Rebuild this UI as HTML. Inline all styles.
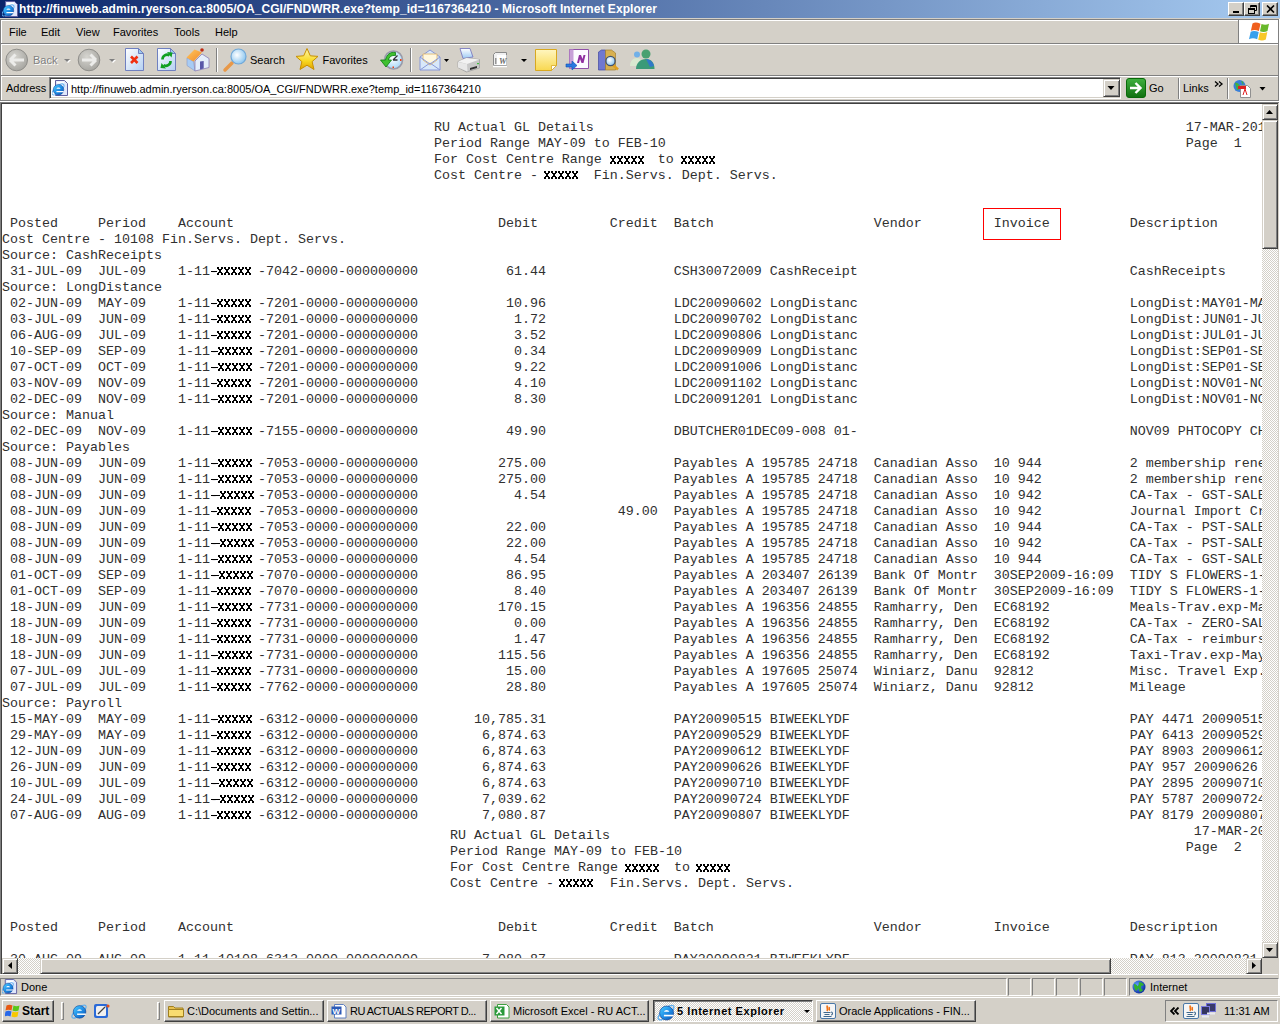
<!DOCTYPE html>
<html><head><meta charset="utf-8">
<style>
*{box-sizing:border-box;margin:0;padding:0}
html,body{width:1280px;height:1024px;overflow:hidden;background:#D4D0C8;font-family:"Liberation Sans",sans-serif;}
.a{position:absolute}
#title{left:0;top:0;width:1280px;height:18px;background:linear-gradient(to right,#0A246A,#A6CAF0);}
#title .t{left:19px;top:2px;color:#fff;font:bold 12px "Liberation Sans",sans-serif;white-space:nowrap;letter-spacing:0.06px}
.wb{top:2px;width:16px;height:14px;background:#D4D0C8;border-top:1px solid #fff;border-left:1px solid #fff;border-right:1px solid #404040;border-bottom:1px solid #404040;box-shadow:inset -1px -1px #808080}
.menu{top:26px;font-size:11px;color:#000;white-space:nowrap}
.tb{font-size:11px;color:#000;white-space:nowrap}
.hsep{height:1px;left:0;width:1280px}
.bevel{background:#D4D0C8;border-top:1px solid #D4D0C8;border-left:1px solid #D4D0C8;border-right:1px solid #404040;border-bottom:1px solid #404040;box-shadow:inset 1px 1px #fff,inset -1px -1px #808080}
.chk{background-color:#D4D0C8;background-image:conic-gradient(#fff 25%,transparent 0 50%,#fff 0 75%,transparent 0);background-size:2px 2px}
#content{left:2px;top:104px;width:1260px;height:854px;background:#fff;overflow:hidden}
.ln{position:absolute;left:0px;height:16px;line-height:16px;font-family:"Liberation Mono",monospace;font-size:13.333px;white-space:pre;color:#303030}
.rx{position:absolute;top:0;width:40px;height:16px;background:#fff;font-family:"Liberation Sans",sans-serif;font-weight:bold;font-size:11px;line-height:16px;color:#000;letter-spacing:-0.5px;-webkit-text-stroke:0.4px #000}
.sb{font-size:11px;white-space:nowrap}
.task{font-size:11px;white-space:nowrap}
.arrow{width:0;height:0;position:absolute}
</style></head><body>
<svg width="0" height="0" style="position:absolute"><defs>
<linearGradient id="ieg" x1="0" y1="0" x2="1" y2="1"><stop offset="0" stop-color="#50d0ff"/><stop offset="0.5" stop-color="#2090e8"/><stop offset="1" stop-color="#0a50b0"/></linearGradient>
<symbol id="ie" viewBox="0 0 16 16">
 <ellipse cx="8" cy="8.5" rx="8" ry="3" transform="rotate(-42 8 8.5)" fill="none" stroke="#60b0f0" stroke-width="1.1"/>
 <circle cx="8.5" cy="8.8" r="5.6" fill="url(#ieg)" stroke="#0a3a90" stroke-width="0.5"/>
 <path d="M6.3 7.7a2.3 1.9 0 0 1 4.4 0z" fill="#fff"/>
 <path d="M6.3 10.2h7.8v1.3h-7.8z" fill="#fff"/>
</symbol>
<symbol id="iepage" viewBox="0 0 17 17">
 <path d="M3.5 0.5h9l3 3v12h-12z" fill="#e0e8fc" stroke="#6060a0"/>
 <path d="M5 1.5h7v2h-7z" fill="#fff"/>
 <use href="#ie" x="-1.5" y="1.5" width="15" height="15"/>
</symbol>
</defs></svg>
<!-- Title bar -->
<div id="title" class="a">
  <svg class="a" style="left:2px;top:1px" width="17" height="17"><use href="#iepage" width="17" height="17"/></svg>
  <div class="a t">http://finuweb.admin.ryerson.ca:8005/OA_CGI/FNDWRR.exe?temp_id=1167364210 - Microsoft Internet Explorer</div>
  <div class="a wb" style="left:1228px"><div class="a" style="left:4px;top:8px;width:6px;height:2px;background:#000"></div></div>
  <div class="a wb" style="left:1244px"><svg class="a" style="left:2px;top:1px" width="10" height="10"><path d="M3.5 1.5h6v5h-2M3.5 1.5v2M3.5 2.5h6" stroke="#000" fill="none"/><rect x="1.5" y="4.5" width="6" height="5" fill="none" stroke="#000"/><path d="M1.5 5.5h6" stroke="#000"/></svg></div>
  <div class="a wb" style="left:1262px"><svg class="a" style="left:3px;top:2px" width="9" height="8"><path d="M1 0.5l7 7M8 0.5l-7 7" stroke="#000" stroke-width="1.6"/></svg></div>
</div>
<!-- frame lines -->
<div class="a" style="left:0;top:19px;width:1280px;height:1px;background:#808080"></div>
<div class="a" style="left:1px;top:20px;width:1277px;height:1px;background:#fff"></div>
<div class="a" style="left:0;top:19px;width:1px;height:82px;background:#808080"></div>
<div class="a" style="left:1px;top:20px;width:1px;height:81px;background:#fff"></div>
<div class="a" style="left:1278px;top:19px;width:1px;height:82px;background:#808080"></div>
<div class="a" style="left:1279px;top:19px;width:1px;height:83px;background:#fff"></div>
<!-- Menu -->
<div class="a menu" style="left:9px">File</div>
<div class="a menu" style="left:41px">Edit</div>
<div class="a menu" style="left:76px">View</div>
<div class="a menu" style="left:113px">Favorites</div>
<div class="a menu" style="left:174px">Tools</div>
<div class="a menu" style="left:215px">Help</div>
<div class="a" style="left:1238px;top:20px;width:1px;height:23px;background:#808080"></div>
<div class="a" style="left:1239px;top:20px;width:39px;height:23px;background:#fff"></div>
<svg class="a" style="left:1248px;top:22px" width="22" height="20" viewBox="0 0 22 20">
 <path d="M4.5 1.5c2-1.2 4.5-1.2 8 0.2l-1.6 7.2c-3-1.2-5.5-1.2-8-0.2z" fill="#f0601e"/>
 <path d="M13.5 2c2.5 1 5 1 7.5-0.2l-1.5 7.2c-2.5 1.2-5 1.2-7.5 0.2z" fill="#68b82a"/>
 <path d="M2.7 9.8c2.2-1 4.8-1 8 0.2l-1.5 7.2c-3-1.2-5.5-1.2-8.2 0z" fill="#38a0ec"/>
 <path d="M11.8 10.3c2.5 1 5 1 7.5-0.2l-1.5 7.4c-2.5 1.2-5 1.2-7.6 0.2z" fill="#f8c828"/>
</svg>
<div class="a hsep" style="top:43px;background:#808080;left:1px;width:1277px"></div>
<div class="a hsep" style="top:44px;background:#fff;left:1px;width:1277px"></div>
<!-- Toolbar -->
<div id="toolbar"><svg class="a" style="left:0;top:45px" width="670" height="30" viewBox="0 45 670 30">
 <defs>
  <radialGradient id="gc" cx="40%" cy="35%" r="70%"><stop offset="0" stop-color="#d6d5d0"/><stop offset="1" stop-color="#a5a49f"/></radialGradient>
  <linearGradient id="pg" x1="0" y1="0" x2="1" y2="1"><stop offset="0" stop-color="#ffffff"/><stop offset="1" stop-color="#b4d0f2"/></linearGradient>
  <linearGradient id="star" x1="0" y1="0" x2="0" y2="1"><stop offset="0" stop-color="#fff8b0"/><stop offset="0.6" stop-color="#f8d820"/><stop offset="1" stop-color="#e0a000"/></linearGradient>
  <radialGradient id="lens" cx="40%" cy="40%" r="60%"><stop offset="0" stop-color="#ffffff"/><stop offset="1" stop-color="#90c8f0"/></radialGradient>
  <linearGradient id="roof" x1="0" y1="0" x2="1" y2="1"><stop offset="0" stop-color="#ffc860"/><stop offset="1" stop-color="#f08828"/></linearGradient>
  <linearGradient id="note" x1="0" y1="0" x2="0" y2="1"><stop offset="0" stop-color="#fff6c0"/><stop offset="1" stop-color="#f8d850"/></linearGradient>
  <linearGradient id="paper" x1="0" y1="0" x2="0" y2="1"><stop offset="0" stop-color="#ffffff"/><stop offset="1" stop-color="#9ccaf4"/></linearGradient>
  <radialGradient id="face" cx="45%" cy="40%" r="60%"><stop offset="0" stop-color="#ffffff"/><stop offset="1" stop-color="#a8d8f8"/></radialGradient>
 </defs>
 <!-- back -->
 <circle cx="16.7" cy="60" r="10.8" fill="url(#gc)" stroke="#8f8e8a" stroke-width="1"/>
 <path d="M10 60h14M10 60l5.5-5.5M10 60l5.5 5.5" stroke="#ececea" stroke-width="3" fill="none"/>
 <text x="34" y="64.5" font-size="11" fill="#fff" style="font-family:'Liberation Sans'">Back</text>
 <text x="33" y="63.5" font-size="11" fill="#808080" style="font-family:'Liberation Sans'">Back</text>
 <path d="M65 60h6l-3 3z" fill="#fff"/><path d="M64 59h6l-3 3z" fill="#808080"/>
 <!-- forward -->
 <circle cx="89" cy="60" r="10.8" fill="url(#gc)" stroke="#8f8e8a" stroke-width="1"/>
 <path d="M82 60h14M96 60l-5.5-5.5M96 60l-5.5 5.5" stroke="#ececea" stroke-width="3" fill="none"/>
 <path d="M110 60h6l-3 3z" fill="#fff"/><path d="M109 59h6l-3 3z" fill="#808080"/>
 <!-- stop -->
 <path d="M125.5 48.5h13l5 5v17h-18z" fill="url(#pg)" stroke="#6f80c0"/>
 <path d="M138.5 48.5v5h5z" fill="#9ccaf0" stroke="#6f80c0"/>
 <path d="M131 56.5l6.5 6.5M137.5 56.5l-6.5 6.5" stroke="#f03010" stroke-width="2.6"/>
 <!-- refresh -->
 <path d="M157.5 48.5h13l5 5v17h-18z" fill="url(#pg)" stroke="#6f80c0"/>
 <path d="M170.5 48.5v5h5z" fill="#9ccaf0" stroke="#6f80c0"/>
 <path d="M162.5 59.5a4.5 4.5 0 0 1 7-4" stroke="#10a020" stroke-width="2.6" fill="none"/><path d="M167 52l5.5 0.5-1 5z" fill="#10a020"/>
 <path d="M170.5 61a4.5 4.5 0 0 1-7 4" stroke="#10a020" stroke-width="2.6" fill="none"/><path d="M166 68.5l-5.5-0.5 1-5z" fill="#10a020"/>
 <!-- home (origin 184,46) -->
 <g transform="translate(184 46)">
  <path d="M3 12l6.5 3.5 1.5 9.5-8-5.5z" fill="#a8ccf4" stroke="#8898c8" stroke-width="0.6"/>
  <path d="M11 15l7-7 7 4.5v9l-14 3.5z" fill="#e4eefa" stroke="#8070b0" stroke-width="0.7"/>
  <path d="M16 15.5l3.7-0.5v7.5l-3.7 1z" fill="#5a58a8"/>
  <path d="M2.5 11.5l8-8 7.5 3-8.5 9z" fill="url(#roof)"/>
  <circle cx="18" cy="4" r="1.8" fill="#c02a10"/>
 </g>
 <!-- sep -->
 <rect x="216" y="48" width="1" height="24" fill="#808080"/><rect x="217" y="48" width="1" height="24" fill="#fff"/>
 <!-- search -->
 <path d="M232 63l-7 7" stroke="#e89848" stroke-width="3.5" stroke-linecap="round"/>
 <circle cx="238.5" cy="56.5" r="7.5" fill="url(#lens)" stroke="#70a8d8" stroke-width="1.2"/>
 <text x="250" y="63.5" font-size="11" fill="#000" style="font-family:'Liberation Sans'">Search</text>
 <!-- star -->
 <path d="M307 48.5l3.3 7.3 7.7 0.6-5.9 5.2 1.9 7.9-7-4.3-7 4.3 1.9-7.9-5.9-5.2 7.7-0.6z" fill="url(#star)" stroke="#c89000" stroke-width="1"/>
 <text x="322.5" y="63.5" font-size="11" fill="#000" style="font-family:'Liberation Sans'">Favorites</text>
 <!-- history (origin 376,46) -->
 <g transform="translate(376 46)">
  <circle cx="17.5" cy="14" r="9" fill="url(#face)" stroke="#9a9aa8" stroke-width="1.6"/>
  <path d="M17 14l4.5-4.5M17 14h4.5" stroke="#303038" stroke-width="1.3"/>
  <rect x="24" y="13" width="1.5" height="2" fill="#f04010"/><rect x="16.5" y="20.5" width="1.5" height="1.5" fill="#f04010"/>
  <path d="M19.5 6.5c-5-1-9 2-10 7.5h-5l5.5 7 5.5-7h-3c0.5-3 3-5 7-4.5z" fill="#40c030" stroke="#0a7a10" stroke-width="0.8"/>
 </g>
 <!-- sep -->
 <rect x="410" y="48" width="1" height="24" fill="#808080"/><rect x="411" y="48" width="1" height="24" fill="#fff"/>
 <!-- mail -->
 <path d="M420 57l10-7 10 7v13h-20z" fill="#d8e8fa" stroke="#8898d8"/>
 <path d="M423 54h14v6l-7 5-7-5z" fill="#fff8e0" stroke="#e0b060" stroke-width="0.8"/>
 <path d="M420 70l10-7 10 7M420 57l10 7 10-7" stroke="#8898d8" fill="none"/>
 <path d="M444 59h5l-2.5 3z" fill="#000"/>
 <!-- printer (origin 454,46) -->
 <g transform="translate(454 46)">
  <path d="M6 2.5h10l3 8.5-10 1.5z" fill="url(#paper)" stroke="#7a7ac0" stroke-width="0.9"/>
  <path d="M4 21.5v-6l8.5-3.5 13 1.5v8.5l-13 4z" fill="#c8c8c8" stroke="#a0a0a0" stroke-width="0.8"/>
  <path d="M4 15.5l8.5-3.5 13 1.5-12.5 4.5z" fill="#f2f2f2"/>
  <path d="M4 16l9 2 .5 7.5-9.5-4z" fill="#e8e8e8"/>
  <path d="M16 22l7-2v2l-7 2z" fill="#303030"/>
  <rect x="23" y="17" width="2" height="1.2" fill="#40c040"/>
 </g>
 <!-- word (origin 488,48) -->
 <g transform="translate(488 48)">
  <path d="M7.5 4.5h11v13h-13v-11z" fill="#f0f0f0" stroke="#8a8a8a"/>
  <rect x="9" y="7" width="9.5" height="10" fill="#fff"/>
  <path d="M7.8 10v6" stroke="#808080" stroke-width="1.2"/>
  <path d="M5 18.5h14" stroke="#fff" stroke-width="1.5"/>
  <text x="11" y="15.5" font-size="8.5" font-style="italic" font-weight="bold" fill="#6a6a6a" style="font-family:'Liberation Serif'">W</text>
 </g>
 <path d="M521 59h6l-3 3z" fill="#000"/>
 <!-- note -->
 <path d="M535.5 49.5h21v16l-5 5h-16z" fill="url(#note)" stroke="#d8a820"/>
 <path d="M551.5 70.5v-5h5z" fill="#fff" stroke="#d8a820" stroke-width="0.8"/>
 <!-- onenote (origin 560,46) -->
 <g transform="translate(560 46)">
  <path d="M9.5 3.5h19v19h-19z" fill="#fdfbff" stroke="#9050a8"/>
  <path d="M9.5 3.5h4v19h-4z" fill="#c8a0d8"/>
  <path d="M17 17l2-8h2l1.5 4 1-4h2l-2 8h-2l-1.5-4-1 4z" fill="#9030a0"/>
  <path d="M6 18h6v-3l5 4.5-5 4.5v-3h-6z" fill="#2a78e0" stroke="#1050b0" stroke-width="0.6"/>
 </g>
 <!-- research (origin 560,46) -->
 <g transform="translate(560 46)">
  <path d="M38.5 6l3-2h4v20h-7z" fill="#7078d0" stroke="#4048a0" stroke-width="0.7"/>
  <path d="M45.5 4h6l4 3v17h-10z" fill="#d8b050" stroke="#a08030" stroke-width="0.7"/>
  <path d="M53 19l5 4.5" stroke="#e0a020" stroke-width="2.6"/>
  <circle cx="50.5" cy="15" r="4.6" fill="url(#lens)" stroke="#405070" stroke-width="1.3"/>
 </g>
 <!-- messenger (origin 560,46) -->
 <g transform="translate(560 46)">
  <circle cx="77" cy="8.5" r="3" fill="#70b0e8"/>
  <path d="M70 20c0-5 3-8 7-8s5 3 5 8z" fill="#d8e8d0"/>
  <circle cx="86" cy="8" r="4.5" fill="#48a070"/>
  <path d="M76 23c0-6 4.5-10 10-10s8.5 4 8.5 10z" fill="#3a9a78"/>
  <path d="M86 13c4 0 7 3 8 7l-4 1z" fill="#3078c8"/>
 </g>
</svg>
</div>
<div class="a hsep" style="top:75px;background:#808080;left:1px;width:1277px"></div>
<div class="a hsep" style="top:76px;background:#fff;left:1px;width:1277px"></div>
<!-- Address bar -->
<div id="addr"><div class="a tb" style="left:6px;top:82px;font-size:11px">Address</div>
<div class="a" style="left:49px;top:77px;width:1072px;height:22px;background:#fff;border-top:1px solid #808080;border-left:1px solid #808080;border-right:1px solid #fff;border-bottom:1px solid #fff;box-shadow:inset 1px 1px #404040,inset -1px -1px #D4D0C8"></div>
<svg class="a" style="left:52px;top:80px" width="17" height="17"><use href="#iepage" width="17" height="17"/></svg>
<div class="a tb" style="left:71px;top:83px;font-size:11px">http://finuweb.admin.ryerson.ca:8005/OA_CGI/FNDWRR.exe?temp_id=1167364210</div>
<div class="a bevel" style="left:1103px;top:79px;width:17px;height:18px"></div>
<svg class="a" style="left:1103px;top:79px" width="17" height="18"><path d="M4.5 7h7l-3.5 4z" fill="#000"/></svg>
<svg class="a" style="left:1126px;top:78px" width="20" height="20" viewBox="0 0 20 20">
 <defs><linearGradient id="go" x1="0" y1="0" x2="0" y2="1"><stop offset="0" stop-color="#40b040"/><stop offset="1" stop-color="#107010"/></linearGradient></defs>
 <rect x="0.5" y="0.5" width="19" height="19" rx="2.5" fill="url(#go)" stroke="#0a6a0a"/>
 <path d="M4 10h10M9.5 5l5 5-5 5" stroke="#fff" stroke-width="2.4" fill="none"/>
</svg>
<div class="a tb" style="left:1149px;top:82px;font-size:11px">Go</div>
<div class="a" style="left:1178px;top:78px;width:1px;height:21px;background:#808080"></div>
<div class="a" style="left:1179px;top:78px;width:1px;height:21px;background:#fff"></div>
<div class="a tb" style="left:1183px;top:82px;font-size:11px">Links</div>
<svg class="a" style="left:1214px;top:81px" width="10" height="7"><path d="M1 0.5l3 2.5-3 2.5M5 0.5l3 2.5-3 2.5" stroke="#000" stroke-width="1.3" fill="none"/></svg>
<div class="a" style="left:1227px;top:78px;width:1px;height:21px;background:#808080"></div>
<div class="a" style="left:1228px;top:78px;width:1px;height:21px;background:#fff"></div>
<svg class="a" style="left:1233px;top:79px" width="18" height="19" viewBox="0 0 18 19">
 <circle cx="6.5" cy="7" r="6" fill="#3a80d8"/><path d="M2 4c2-1 4 1 5 3s-1 4-3 4M8 2c2 0 3 2 2 4" fill="#40b040" stroke="none"/>
 <path d="M7.5 6.5h7l3 3v9h-10z" fill="#fff" stroke="#909090"/>
 <rect x="5" y="7" width="8" height="3" fill="#e02020"/>
 <path d="M10 16l2-6 2 6" stroke="#e02020" fill="none"/>
</svg>
<svg class="a" style="left:1259px;top:87px" width="7" height="4"><path d="M0.5 0h6l-3 3.5z" fill="#000"/></svg>
</div>
<div class="a hsep" style="top:100px;background:#808080;width:1279px"></div>
<div class="a hsep" style="top:101px;background:#fff"></div>
<div class="a hsep" style="top:102px;background:#808080"></div>
<div class="a hsep" style="top:103px;background:#404040;left:1px;width:1278px"></div>
<div class="a" style="left:0;top:102px;width:1px;height:874px;background:#808080"></div>
<div class="a" style="left:1px;top:103px;width:1px;height:872px;background:#404040"></div>
<div class="a" style="left:1278px;top:103px;width:1px;height:872px;background:#D4D0C8"></div>
<div class="a" style="left:1279px;top:102px;width:1px;height:874px;background:#fff"></div>
<div class="a" style="left:1px;top:974px;width:1278px;height:1px;background:#D4D0C8"></div>
<div class="a" style="left:0;top:975px;width:1280px;height:1px;background:#fff"></div>
<!-- Content -->
<div id="content" class="a">
<div class="ln" style="top:16px">                                                      RU Actual GL Details                                                                          17-MAR-2010</div>
<div class="ln" style="top:32px">                                                      Period Range MAY-09 to FEB-10                                                                 Page  1</div>
<div class="ln" style="top:48px">                                                      For Cost Centre Range       to</div>
<div class="ln" style="top:64px">                                                      Cost Centre -       Fin.Servs. Dept. Servs.</div>
<div class="ln" style="top:112px"> Posted     Period    Account                                 Debit         Credit  Batch                    Vendor         Invoice          Description</div>
<div class="ln" style="top:128px">Cost Centre - 10108 Fin.Servs. Dept. Servs.</div>
<div class="ln" style="top:144px">Source: CashReceipts</div>
<div class="ln" style="top:160px"> 31-JUL-09  JUL-09    1-11-     -7042-0000-000000000           61.44                CSH30072009 CashReceipt                                  CashReceipts</div>
<div class="ln" style="top:176px">Source: LongDistance</div>
<div class="ln" style="top:192px"> 02-JUN-09  MAY-09    1-11-     -7201-0000-000000000           10.96                LDC20090602 LongDistanc                                  LongDist:MAY01-MAY31</div>
<div class="ln" style="top:208px"> 03-JUL-09  JUN-09    1-11-     -7201-0000-000000000            1.72                LDC20090702 LongDistanc                                  LongDist:JUN01-JUN30</div>
<div class="ln" style="top:224px"> 06-AUG-09  JUL-09    1-11-     -7201-0000-000000000            3.52                LDC20090806 LongDistanc                                  LongDist:JUL01-JUL31</div>
<div class="ln" style="top:240px"> 10-SEP-09  SEP-09    1-11-     -7201-0000-000000000            0.34                LDC20090909 LongDistanc                                  LongDist:SEP01-SEP30</div>
<div class="ln" style="top:256px"> 07-OCT-09  OCT-09    1-11-     -7201-0000-000000000            9.22                LDC20091006 LongDistanc                                  LongDist:SEP01-SEP30</div>
<div class="ln" style="top:272px"> 03-NOV-09  NOV-09    1-11-     -7201-0000-000000000            4.10                LDC20091102 LongDistanc                                  LongDist:NOV01-NOV30</div>
<div class="ln" style="top:288px"> 02-DEC-09  NOV-09    1-11-     -7201-0000-000000000            8.30                LDC20091201 LongDistanc                                  LongDist:NOV01-NOV30</div>
<div class="ln" style="top:304px">Source: Manual</div>
<div class="ln" style="top:320px"> 02-DEC-09  NOV-09    1-11-     -7155-0000-000000000           49.90                DBUTCHER01DEC09-008 01-                                  NOV09 PHTOCOPY CHARGES</div>
<div class="ln" style="top:336px">Source: Payables</div>
<div class="ln" style="top:352px"> 08-JUN-09  JUN-09    1-11-     -7053-0000-000000000          275.00                Payables A 195785 24718  Canadian Asso  10 944           2 membership renewal</div>
<div class="ln" style="top:368px"> 08-JUN-09  JUN-09    1-11-     -7053-0000-000000000          275.00                Payables A 195785 24718  Canadian Asso  10 942           2 membership renewal</div>
<div class="ln" style="top:384px"> 08-JUN-09  JUN-09    1-11-     -7053-0000-000000000            4.54                Payables A 195785 24718  Canadian Asso  10 942           CA-Tax - GST-SALES</div>
<div class="ln" style="top:400px"> 08-JUN-09  JUN-09    1-11-     -7053-0000-000000000                         49.00  Payables A 195785 24718  Canadian Asso  10 942           Journal Import Created</div>
<div class="ln" style="top:416px"> 08-JUN-09  JUN-09    1-11-     -7053-0000-000000000           22.00                Payables A 195785 24718  Canadian Asso  10 944           CA-Tax - PST-SALES</div>
<div class="ln" style="top:432px"> 08-JUN-09  JUN-09    1-11-     -7053-0000-000000000           22.00                Payables A 195785 24718  Canadian Asso  10 942           CA-Tax - PST-SALES</div>
<div class="ln" style="top:448px"> 08-JUN-09  JUN-09    1-11-     -7053-0000-000000000            4.54                Payables A 195785 24718  Canadian Asso  10 944           CA-Tax - GST-SALES</div>
<div class="ln" style="top:464px"> 01-OCT-09  SEP-09    1-11-     -7070-0000-000000000           86.95                Payables A 203407 26139  Bank Of Montr  30SEP2009-16:09  TIDY S FLOWERS-1-800</div>
<div class="ln" style="top:480px"> 01-OCT-09  SEP-09    1-11-     -7070-0000-000000000            8.40                Payables A 203407 26139  Bank Of Montr  30SEP2009-16:09  TIDY S FLOWERS-1-800</div>
<div class="ln" style="top:496px"> 18-JUN-09  JUN-09    1-11-     -7731-0000-000000000          170.15                Payables A 196356 24855  Ramharry, Den  EC68192          Meals-Trav.exp-May</div>
<div class="ln" style="top:512px"> 18-JUN-09  JUN-09    1-11-     -7731-0000-000000000            0.00                Payables A 196356 24855  Ramharry, Den  EC68192          CA-Tax - ZERO-SALES</div>
<div class="ln" style="top:528px"> 18-JUN-09  JUN-09    1-11-     -7731-0000-000000000            1.47                Payables A 196356 24855  Ramharry, Den  EC68192          CA-Tax - reimbursement</div>
<div class="ln" style="top:544px"> 18-JUN-09  JUN-09    1-11-     -7731-0000-000000000          115.56                Payables A 196356 24855  Ramharry, Den  EC68192          Taxi-Trav.exp-May</div>
<div class="ln" style="top:560px"> 07-JUL-09  JUL-09    1-11-     -7731-0000-000000000           15.00                Payables A 197605 25074  Winiarz, Danu  92812            Misc. Travel Exp.</div>
<div class="ln" style="top:576px"> 07-JUL-09  JUL-09    1-11-     -7762-0000-000000000           28.80                Payables A 197605 25074  Winiarz, Danu  92812            Mileage</div>
<div class="ln" style="top:592px">Source: Payroll</div>
<div class="ln" style="top:608px"> 15-MAY-09  MAY-09    1-11-     -6312-0000-000000000       10,785.31                PAY20090515 BIWEEKLYDF                                   PAY 4471 20090515</div>
<div class="ln" style="top:624px"> 29-MAY-09  MAY-09    1-11-     -6312-0000-000000000        6,874.63                PAY20090529 BIWEEKLYDF                                   PAY 6413 20090529</div>
<div class="ln" style="top:640px"> 12-JUN-09  JUN-09    1-11-     -6312-0000-000000000        6,874.63                PAY20090612 BIWEEKLYDF                                   PAY 8903 20090612</div>
<div class="ln" style="top:656px"> 26-JUN-09  JUN-09    1-11-     -6312-0000-000000000        6,874.63                PAY20090626 BIWEEKLYDF                                   PAY 957 20090626</div>
<div class="ln" style="top:672px"> 10-JUL-09  JUL-09    1-11-     -6312-0000-000000000        6,874.63                PAY20090710 BIWEEKLYDF                                   PAY 2895 20090710</div>
<div class="ln" style="top:688px"> 24-JUL-09  JUL-09    1-11-     -6312-0000-000000000        7,039.62                PAY20090724 BIWEEKLYDF                                   PAY 5787 20090724</div>
<div class="ln" style="top:704px"> 07-AUG-09  AUG-09    1-11-     -6312-0000-000000000        7,080.87                PAY20090807 BIWEEKLYDF                                   PAY 8179 20090807</div>
<div class="ln" style="top:720px">                                                                                                                                                     17-MAR-2010</div>
<div class="ln" style="top:736px">                                                                                                                                                    Page  2</div>
<div class="ln" style="top:816px"> Posted     Period    Account                                 Debit         Credit  Batch                    Vendor         Invoice          Description</div>
<div class="ln" style="top:848px"> 30-AUG-09  AUG-09    1-11-10108-6312-0000-000000000        7,080.87                PAY20090821 BIWEEKLYDF                                   PAY 813 20090821</div>
<div class="ln" style="top:724px;left:448px">RU Actual GL Details</div>
<div class="ln" style="top:740px;left:448px">Period Range MAY-09 to FEB-10</div>
<div class="ln" style="top:756px;left:448px">For Cost Centre Range       to</div>
<div class="ln" style="top:772px;left:448px">Cost Centre -       Fin.Servs. Dept. Servs.</div>
<svg class="a" style="left:0;top:0" width="1260" height="854" shape-rendering="crispEdges"><defs><path id="xg" d="M0 0h2v2h-2zM4 0h2v2h-2zM1 2h4v1h-4zM2 3h2v2h-2zM1 5h4v1h-4zM0 6h2v2h-2zM4 6h2v2h-2z"/></defs><use href="#xg" x="608" y="52"/><use href="#xg" x="615" y="52"/><use href="#xg" x="622" y="52"/><use href="#xg" x="629" y="52"/><use href="#xg" x="636" y="52"/><use href="#xg" x="679" y="52"/><use href="#xg" x="686" y="52"/><use href="#xg" x="693" y="52"/><use href="#xg" x="700" y="52"/><use href="#xg" x="707" y="52"/><use href="#xg" x="542" y="67"/><use href="#xg" x="549" y="67"/><use href="#xg" x="556" y="67"/><use href="#xg" x="563" y="67"/><use href="#xg" x="570" y="67"/><use href="#xg" x="215" y="163"/><use href="#xg" x="222" y="163"/><use href="#xg" x="229" y="163"/><use href="#xg" x="236" y="163"/><use href="#xg" x="243" y="163"/><rect x="209" y="167" width="6" height="1"/><use href="#xg" x="215" y="195"/><use href="#xg" x="222" y="195"/><use href="#xg" x="229" y="195"/><use href="#xg" x="236" y="195"/><use href="#xg" x="243" y="195"/><rect x="209" y="199" width="6" height="1"/><use href="#xg" x="215" y="211"/><use href="#xg" x="222" y="211"/><use href="#xg" x="229" y="211"/><use href="#xg" x="236" y="211"/><use href="#xg" x="243" y="211"/><rect x="209" y="215" width="6" height="1"/><use href="#xg" x="215" y="227"/><use href="#xg" x="222" y="227"/><use href="#xg" x="229" y="227"/><use href="#xg" x="236" y="227"/><use href="#xg" x="243" y="227"/><rect x="209" y="231" width="6" height="1"/><use href="#xg" x="216" y="243"/><use href="#xg" x="223" y="243"/><use href="#xg" x="230" y="243"/><use href="#xg" x="237" y="243"/><use href="#xg" x="244" y="243"/><rect x="209" y="247" width="7" height="1"/><use href="#xg" x="216" y="259"/><use href="#xg" x="223" y="259"/><use href="#xg" x="230" y="259"/><use href="#xg" x="237" y="259"/><use href="#xg" x="244" y="259"/><rect x="209" y="263" width="7" height="1"/><use href="#xg" x="215" y="275"/><use href="#xg" x="222" y="275"/><use href="#xg" x="229" y="275"/><use href="#xg" x="236" y="275"/><use href="#xg" x="243" y="275"/><rect x="209" y="279" width="6" height="1"/><use href="#xg" x="216" y="291"/><use href="#xg" x="223" y="291"/><use href="#xg" x="230" y="291"/><use href="#xg" x="237" y="291"/><use href="#xg" x="244" y="291"/><rect x="209" y="295" width="7" height="1"/><use href="#xg" x="216" y="323"/><use href="#xg" x="223" y="323"/><use href="#xg" x="230" y="323"/><use href="#xg" x="237" y="323"/><use href="#xg" x="244" y="323"/><rect x="209" y="327" width="7" height="1"/><use href="#xg" x="216" y="355"/><use href="#xg" x="223" y="355"/><use href="#xg" x="230" y="355"/><use href="#xg" x="237" y="355"/><use href="#xg" x="244" y="355"/><rect x="209" y="359" width="7" height="1"/><use href="#xg" x="216" y="371"/><use href="#xg" x="223" y="371"/><use href="#xg" x="230" y="371"/><use href="#xg" x="237" y="371"/><use href="#xg" x="244" y="371"/><rect x="209" y="375" width="7" height="1"/><use href="#xg" x="218" y="387"/><use href="#xg" x="225" y="387"/><use href="#xg" x="232" y="387"/><use href="#xg" x="239" y="387"/><use href="#xg" x="246" y="387"/><rect x="209" y="391" width="9" height="1"/><use href="#xg" x="215" y="403"/><use href="#xg" x="222" y="403"/><use href="#xg" x="229" y="403"/><use href="#xg" x="236" y="403"/><use href="#xg" x="243" y="403"/><rect x="209" y="407" width="6" height="1"/><use href="#xg" x="216" y="419"/><use href="#xg" x="223" y="419"/><use href="#xg" x="230" y="419"/><use href="#xg" x="237" y="419"/><use href="#xg" x="244" y="419"/><rect x="209" y="423" width="7" height="1"/><use href="#xg" x="218" y="435"/><use href="#xg" x="225" y="435"/><use href="#xg" x="232" y="435"/><use href="#xg" x="239" y="435"/><use href="#xg" x="246" y="435"/><rect x="209" y="439" width="9" height="1"/><use href="#xg" x="216" y="451"/><use href="#xg" x="223" y="451"/><use href="#xg" x="230" y="451"/><use href="#xg" x="237" y="451"/><use href="#xg" x="244" y="451"/><rect x="209" y="455" width="7" height="1"/><use href="#xg" x="217" y="467"/><use href="#xg" x="224" y="467"/><use href="#xg" x="231" y="467"/><use href="#xg" x="238" y="467"/><use href="#xg" x="245" y="467"/><rect x="209" y="471" width="8" height="1"/><use href="#xg" x="215" y="483"/><use href="#xg" x="222" y="483"/><use href="#xg" x="229" y="483"/><use href="#xg" x="236" y="483"/><use href="#xg" x="243" y="483"/><rect x="209" y="487" width="6" height="1"/><use href="#xg" x="216" y="499"/><use href="#xg" x="223" y="499"/><use href="#xg" x="230" y="499"/><use href="#xg" x="237" y="499"/><use href="#xg" x="244" y="499"/><rect x="209" y="503" width="7" height="1"/><use href="#xg" x="215" y="515"/><use href="#xg" x="222" y="515"/><use href="#xg" x="229" y="515"/><use href="#xg" x="236" y="515"/><use href="#xg" x="243" y="515"/><rect x="209" y="519" width="6" height="1"/><use href="#xg" x="215" y="531"/><use href="#xg" x="222" y="531"/><use href="#xg" x="229" y="531"/><use href="#xg" x="236" y="531"/><use href="#xg" x="243" y="531"/><rect x="209" y="535" width="6" height="1"/><use href="#xg" x="216" y="547"/><use href="#xg" x="223" y="547"/><use href="#xg" x="230" y="547"/><use href="#xg" x="237" y="547"/><use href="#xg" x="244" y="547"/><rect x="209" y="551" width="7" height="1"/><use href="#xg" x="215" y="563"/><use href="#xg" x="222" y="563"/><use href="#xg" x="229" y="563"/><use href="#xg" x="236" y="563"/><use href="#xg" x="243" y="563"/><rect x="209" y="567" width="6" height="1"/><use href="#xg" x="215" y="579"/><use href="#xg" x="222" y="579"/><use href="#xg" x="229" y="579"/><use href="#xg" x="236" y="579"/><use href="#xg" x="243" y="579"/><rect x="209" y="583" width="6" height="1"/><use href="#xg" x="216" y="611"/><use href="#xg" x="223" y="611"/><use href="#xg" x="230" y="611"/><use href="#xg" x="237" y="611"/><use href="#xg" x="244" y="611"/><rect x="209" y="615" width="7" height="1"/><use href="#xg" x="215" y="627"/><use href="#xg" x="222" y="627"/><use href="#xg" x="229" y="627"/><use href="#xg" x="236" y="627"/><use href="#xg" x="243" y="627"/><rect x="209" y="631" width="6" height="1"/><use href="#xg" x="215" y="643"/><use href="#xg" x="222" y="643"/><use href="#xg" x="229" y="643"/><use href="#xg" x="236" y="643"/><use href="#xg" x="243" y="643"/><rect x="209" y="647" width="6" height="1"/><use href="#xg" x="215" y="659"/><use href="#xg" x="222" y="659"/><use href="#xg" x="229" y="659"/><use href="#xg" x="236" y="659"/><use href="#xg" x="243" y="659"/><rect x="209" y="663" width="6" height="1"/><use href="#xg" x="217" y="675"/><use href="#xg" x="224" y="675"/><use href="#xg" x="231" y="675"/><use href="#xg" x="238" y="675"/><use href="#xg" x="245" y="675"/><rect x="209" y="679" width="8" height="1"/><use href="#xg" x="218" y="691"/><use href="#xg" x="225" y="691"/><use href="#xg" x="232" y="691"/><use href="#xg" x="239" y="691"/><use href="#xg" x="246" y="691"/><rect x="209" y="695" width="9" height="1"/><use href="#xg" x="215" y="707"/><use href="#xg" x="222" y="707"/><use href="#xg" x="229" y="707"/><use href="#xg" x="236" y="707"/><use href="#xg" x="243" y="707"/><rect x="209" y="711" width="6" height="1"/><use href="#xg" x="623" y="760"/><use href="#xg" x="630" y="760"/><use href="#xg" x="637" y="760"/><use href="#xg" x="644" y="760"/><use href="#xg" x="651" y="760"/><use href="#xg" x="694" y="760"/><use href="#xg" x="701" y="760"/><use href="#xg" x="708" y="760"/><use href="#xg" x="715" y="760"/><use href="#xg" x="722" y="760"/><use href="#xg" x="557" y="775"/><use href="#xg" x="564" y="775"/><use href="#xg" x="571" y="775"/><use href="#xg" x="578" y="775"/><use href="#xg" x="585" y="775"/></svg>
<div class="a" style="left:981px;top:104px;width:78px;height:32px;border:1px solid #f00"></div>
</div>
<!-- scrollbars -->
<div id="scroll"><!-- vertical -->
<div class="a chk" style="left:1262px;top:104px;width:16px;height:854px"></div>
<div class="a bevel" style="left:1262px;top:104px;width:16px;height:16px"></div>
<svg class="a" style="left:1262px;top:104px" width="16" height="16"><path d="M4 10h7l-3.5-4z" fill="#000"/></svg>
<div class="a bevel" style="left:1262px;top:120px;width:16px;height:129px"></div>
<div class="a bevel" style="left:1262px;top:942px;width:16px;height:16px"></div>
<svg class="a" style="left:1262px;top:942px" width="16" height="16"><path d="M4 6h7l-3.5 4z" fill="#000"/></svg>
<!-- horizontal -->
<div class="a chk" style="left:2px;top:958px;width:1260px;height:16px"></div>
<div class="a bevel" style="left:2px;top:958px;width:16px;height:16px"></div>
<svg class="a" style="left:2px;top:958px" width="16" height="16"><path d="M10 4v7l-4-3.5z" fill="#000"/></svg>
<div class="a bevel" style="left:40px;top:958px;width:1071px;height:16px"></div>
<div class="a bevel" style="left:1246px;top:958px;width:16px;height:16px"></div>
<svg class="a" style="left:1246px;top:958px" width="16" height="16"><path d="M6 4v7l4-3.5z" fill="#000"/></svg>
<div class="a" style="left:1262px;top:958px;width:16px;height:16px;background:#D4D0C8"></div>
</div>
<!-- Status bar -->
<div id="status"><div class="a" style="left:0;top:974px;width:1280px;height:1px;background:#fff"></div>
<div class="a" style="left:0;top:975px;width:1280px;height:21px;background:#D4D0C8"></div>
<div class="a" style="left:0;top:978px;width:1007px;height:18px;border-top:1px solid #808080;border-left:1px solid #808080;border-bottom:1px solid #fff;border-right:1px solid #fff"></div>
<svg class="a" style="left:2px;top:979px" width="16" height="16"><use href="#iepage" width="16" height="16"/></svg>
<div class="a sb" style="left:21px;top:981px">Done</div>
<div class="a" style="left:1008px;top:978px;width:23px;height:18px;border-top:1px solid #808080;border-left:1px solid #808080;border-bottom:1px solid #fff;border-right:1px solid #fff"></div>
<div class="a" style="left:1032px;top:978px;width:23px;height:18px;border-top:1px solid #808080;border-left:1px solid #808080;border-bottom:1px solid #fff;border-right:1px solid #fff"></div>
<div class="a" style="left:1056px;top:978px;width:23px;height:18px;border-top:1px solid #808080;border-left:1px solid #808080;border-bottom:1px solid #fff;border-right:1px solid #fff"></div>
<div class="a" style="left:1080px;top:978px;width:23px;height:18px;border-top:1px solid #808080;border-left:1px solid #808080;border-bottom:1px solid #fff;border-right:1px solid #fff"></div>
<div class="a" style="left:1104px;top:978px;width:23px;height:18px;border-top:1px solid #808080;border-left:1px solid #808080;border-bottom:1px solid #fff;border-right:1px solid #fff"></div>
<div class="a" style="left:1129px;top:978px;width:150px;height:18px;border-top:1px solid #808080;border-left:1px solid #808080;border-bottom:1px solid #fff;border-right:1px solid #fff"></div>
<svg class="a" style="left:1132px;top:980px" width="14" height="14" viewBox="0 0 14 14">
 <defs><radialGradient id="glb" cx="35%" cy="35%" r="70%"><stop offset="0" stop-color="#60a0ff"/><stop offset="1" stop-color="#0a2aa0"/></radialGradient></defs>
 <circle cx="7" cy="7" r="6.5" fill="url(#glb)"/>
 <path d="M2 4c2 0 3 1 4 3s-1 3-2 4c-1-1-2-3-2-7zM7 2c2 0 4 1 5 3-1 1-3 0-3 2s1 2 2 3c-1 2-3 2-4 1 1-2-1-3-2-4 1-1 2-2 2-5z" fill="#30b030"/>
</svg>
<div class="a sb" style="left:1150px;top:981px">Internet</div>
<div class="a" style="left:1278px;top:104px;width:1px;height:871px;background:#D4D0C8"></div>
<div class="a" style="left:1279px;top:102px;width:1px;height:894px;background:#fff"></div>
</div>
<!-- Taskbar -->
<div id="taskbar"><div class="a" style="left:0;top:996px;width:1280px;height:28px;background:#D4D0C8"></div>
<div class="a" style="left:0;top:997px;width:1280px;height:1px;background:#fff"></div>
<!-- start -->
<div class="a" style="left:2px;top:1000px;width:52px;height:22px;background:#D4D0C8;border-top:1px solid #fff;border-left:1px solid #fff;border-right:1px solid #404040;border-bottom:1px solid #404040;box-shadow:inset -1px -1px #808080"></div>
<svg class="a" style="left:5px;top:1003px" width="16" height="16" viewBox="0 0 16 16">
 <path d="M1.5 2.5c2-1 4-1 6 0l-1 5c-2-1-4-1-6 0z" fill="#e85810"/>
 <path d="M8.5 2.5c2 1 4 1 6 0l-1 5c-2 1-4 1-6 0z" fill="#58c818"/>
 <path d="M0.5 8.5c2-1 4-1 6 0l-1 5c-2-1-4-1-6 0z" fill="#2868e8"/>
 <path d="M7.5 8.5c2 1 4 1 6 0l-1 5c-2 1-4 1-6 0z" fill="#f8c800"/>
</svg>
<div class="a" style="left:22px;top:1004px;font:bold 12px 'Liberation Sans',sans-serif">Start</div>
<!-- quick launch -->
<div class="a" style="left:61px;top:1002px;width:3px;height:18px;border-left:1px solid #fff;border-top:1px solid #fff;border-right:1px solid #808080;border-bottom:1px solid #808080"></div>
<svg class="a" style="left:70px;top:1002px" width="18" height="18"><use href="#ie" width="18" height="18"/></svg>
<svg class="a" style="left:93px;top:1002px" width="18" height="18" viewBox="0 0 18 18">
 <rect x="1" y="2" width="14" height="14" rx="2" fill="#2a6ad8"/>
 <rect x="3" y="4" width="10" height="10" rx="1.5" fill="#f0f0f0"/>
 <path d="M5 12l7-7" stroke="#404040" stroke-width="1.2"/>
 <circle cx="15" cy="4" r="1.6" fill="#e05020"/>
</svg>
<div class="a" style="left:157px;top:1002px;width:3px;height:18px;border-left:1px solid #fff;border-top:1px solid #fff;border-right:1px solid #808080;border-bottom:1px solid #808080"></div>
<!-- task buttons -->
<div class="a" style="left:164px;top:1000px;width:160px;height:22px;background:#D4D0C8;border-top:1px solid #fff;border-left:1px solid #fff;border-right:1px solid #404040;border-bottom:1px solid #404040;box-shadow:inset -1px -1px #808080"></div>
<svg class="a" style="left:168px;top:1003px" width="16" height="16" viewBox="0 0 16 16"><path d="M0.5 3.5h5l1.5 1.5h8v9h-14.5z" fill="#e8c050" stroke="#a08020"/><path d="M0.5 6.5h15v7h-15z" fill="#f8dc70" stroke="#a08020"/></svg>
<div class="a task" style="left:187px;top:1005px">C:\Documents and Settin...</div>

<div class="a" style="left:327px;top:1000px;width:160px;height:22px;background:#D4D0C8;border-top:1px solid #fff;border-left:1px solid #fff;border-right:1px solid #404040;border-bottom:1px solid #404040;box-shadow:inset -1px -1px #808080"></div>
<svg class="a" style="left:331px;top:1003px" width="16" height="16" viewBox="0 0 16 16"><path d="M3.5 1.5h9l2.5 2.5v11h-11.5z" fill="#fff" stroke="#6080c0"/><rect x="0.5" y="3.5" width="10" height="8" fill="#2a5ab8"/><text x="1.5" y="10.5" font-size="8" font-weight="bold" fill="#fff" style="font-family:'Liberation Sans'">W</text></svg>
<div class="a task" style="left:350px;top:1005px;letter-spacing:-0.55px">RU ACTUALS REPORT D...</div>

<div class="a" style="left:490px;top:1000px;width:159px;height:22px;background:#D4D0C8;border-top:1px solid #fff;border-left:1px solid #fff;border-right:1px solid #404040;border-bottom:1px solid #404040;box-shadow:inset -1px -1px #808080"></div>
<svg class="a" style="left:494px;top:1003px" width="16" height="16" viewBox="0 0 16 16"><path d="M3.5 1.5h9l2.5 2.5v11h-11.5z" fill="#fff" stroke="#40a040"/><rect x="0.5" y="3.5" width="10" height="9" fill="#2a9a3a"/><path d="M2.5 5l5 6M7.5 5l-5 6" stroke="#fff" stroke-width="1.5"/></svg>
<div class="a task" style="left:513px;top:1005px">Microsoft Excel - RU ACT...</div>

<div class="a chk" style="left:653px;top:1000px;width:160px;height:22px;border-top:1px solid #404040;border-left:1px solid #404040;border-right:1px solid #fff;border-bottom:1px solid #fff;box-shadow:inset 1px 1px #808080"></div>
<svg class="a" style="left:656px;top:1002px" width="20" height="20"><use href="#ie" width="20" height="20"/></svg>
<div class="a task" style="left:677px;top:1005px;font-weight:bold;letter-spacing:0.55px">5 Internet Explorer</div>
<svg class="a" style="left:804px;top:1010px" width="6" height="4"><path d="M0 0h6l-3 3z" fill="#000"/></svg>

<div class="a" style="left:816px;top:1000px;width:160px;height:22px;background:#D4D0C8;border-top:1px solid #fff;border-left:1px solid #fff;border-right:1px solid #404040;border-bottom:1px solid #404040;box-shadow:inset -1px -1px #808080"></div>
<svg class="a" style="left:820px;top:1003px" width="16" height="16" viewBox="0 0 16 16"><rect x="0.5" y="0.5" width="15" height="15" rx="1.5" fill="#f6f6f6" stroke="#4a78a8"/><path d="M7.5 2.5c-1.5 2 1 3-0.5 5.5M9.5 4c-1 1.5 0.5 2-0.5 3.5" stroke="#f07010" stroke-width="1.6" fill="none"/><path d="M3.5 9.5h7M4.5 11.5h5M3.5 13.5h8M11 9c2 0 2 3 0 3" stroke="#40688c" stroke-width="1.1" fill="none"/></svg>
<div class="a task" style="left:839px;top:1005px">Oracle Applications - FIN...</div>

<!-- tray -->
<div class="a" style="left:1165px;top:1000px;width:113px;height:22px;border-top:1px solid #808080;border-left:1px solid #808080;border-right:1px solid #fff;border-bottom:1px solid #fff"></div>
<svg class="a" style="left:1170px;top:1007px" width="10" height="8"><path d="M4.5 0.5l-3.5 3.5 3.5 3.5M8.5 0.5l-3.5 3.5 3.5 3.5" stroke="#000" stroke-width="1.8" fill="none"/></svg>
<svg class="a" style="left:1183px;top:1003px" width="16" height="16" viewBox="0 0 16 16"><rect x="0.5" y="0.5" width="15" height="15" rx="1.5" fill="#f6f6f6" stroke="#4a78a8"/><path d="M7.5 2.5c-1.5 2 1 3-0.5 5.5M9.5 4c-1 1.5 0.5 2-0.5 3.5" stroke="#f07010" stroke-width="1.6" fill="none"/><path d="M3.5 9.5h7M4.5 11.5h5M3.5 13.5h8M11 9c2 0 2 3 0 3" stroke="#40688c" stroke-width="1.1" fill="none"/></svg>
<svg class="a" style="left:1201px;top:1003px" width="16" height="16" viewBox="0 0 16 16"><rect x="5.5" y="0.5" width="9" height="8" fill="#3a3a6a" stroke="#7070d8"/><rect x="0.5" y="3.5" width="8" height="8" fill="#34345e" stroke="#7a7ae0"/><path d="M1 13.5h7M6 10.5h8" stroke="#e8e8f0" stroke-width="2"/></svg>
<div class="a task" style="left:1224px;top:1005px">11:31 AM</div>
</div>
</body></html>
